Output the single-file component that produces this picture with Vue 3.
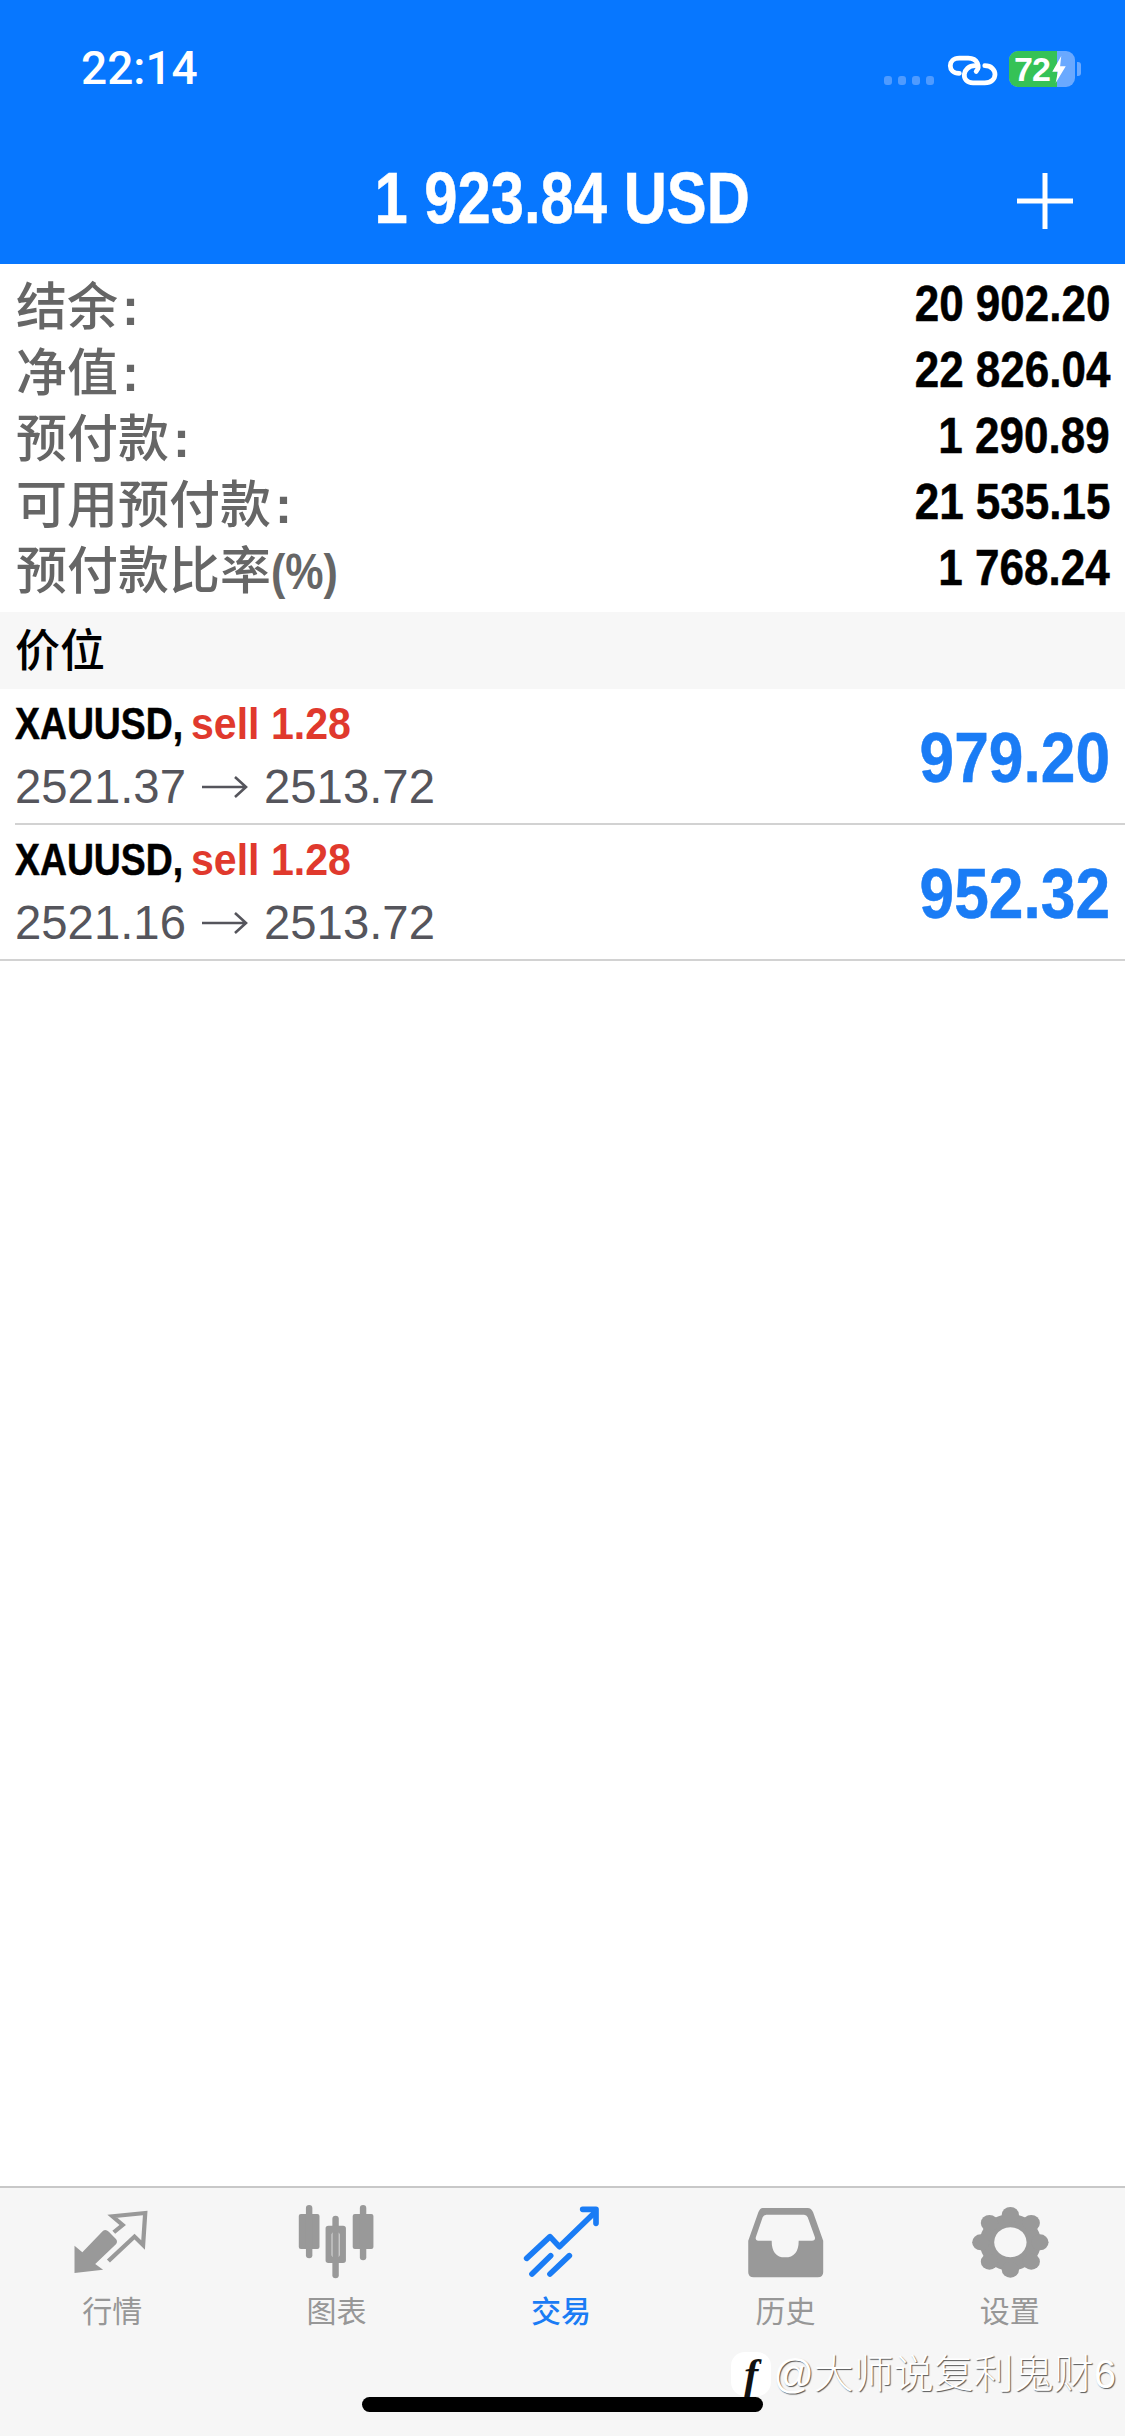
<script setup>
const rows = [
  { label: '结余', colon: true, value: '20 902.20' },
  { label: '净值', colon: true, value: '22 826.04' },
  { label: '预付款', colon: true, value: '1 290.89' },
  { label: '可用预付款', colon: true, value: '21 535.15' },
  { label: '预付款比率', suffix: '(%)', value: '1 768.24' },
]
const positions = [
  { open: '2521.37', close: '2513.72', profit: '979.20' },
  { open: '2521.16', close: '2513.72', profit: '952.32' },
]
const gearAngles = [0, 45, 90, 135, 180, 225, 270, 315]
const bump = (a, r) => ({
  cx: 1253 + r * Math.sin((a * Math.PI) / 180),
  cy: 220 - r * Math.cos((a * Math.PI) / 180),
})
</script>

<template>
  <div class="phone">
    <header class="top">
      <div class="status">
        <span class="time">22:14</span>
        <div class="status-right">
          <div class="dots"><i></i><i></i><i></i><i></i></div>
          <svg class="link" viewBox="250 70 170 95" fill="none" stroke="#fff" stroke-width="15" stroke-linecap="round">
            <path d="M292 128C254 128 254 80 292 80H320C350 80 358 108 345 122" />
            <path d="M342 104C300 104 295 158 335 158H372C415 158 415 104 372 104" />
          </svg>
          <div class="battery">
            <div class="battery-fill"></div>
            <span class="battery-num">72</span>
            <svg class="bolt" viewBox="0 0 14 24"><path d="M9 0 1 14h5l-2 10 9-15H8z" fill="#fff" /></svg>
          </div>
          <i class="nub"></i>
        </div>
      </div>
      <div class="titlebar">
        <span class="title">1 923.84 USD</span>
        <svg class="plus" viewBox="0 0 56 56"><path d="M28 0v56M0 28h56" stroke="#fff" stroke-width="5" /></svg>
      </div>
    </header>

    <main class="content">
      <section class="summary">
        <div v-for="r in rows" :key="r.label" class="sum-row">
          <span class="sum-label">{{ r.label }}<span v-if="r.colon" class="colon">:</span><span v-if="r.suffix" class="suffix">{{ r.suffix }}</span></span>
          <span class="sum-value">{{ r.value }}</span>
        </div>
      </section>
      <div class="band">价位</div>
      <section>
        <div v-for="(p, i) in positions" :key="i" class="pos" :class="{ last: i === 1 }">
          <div class="pos-left">
            <div class="pos-head"><span class="sym">XAUUSD,</span><span class="side">sell 1.28</span></div>
            <div class="pos-price"><span>{{ p.open }}</span><svg class="arrow" viewBox="0 0 46 22" fill="none" stroke="#55555c" stroke-width="2.6"><path d="M0 11h44M33 1l11 10-11 10" /></svg><span>{{ p.close }}</span></div>
          </div>
          <span class="profit">{{ p.profit }}</span>
        </div>
      </section>
    </main>

    <nav class="tabs">
      <div class="tab">
        <svg viewBox="203 105 224 240" preserveAspectRatio="none" fill="#999">
          <path d="M210 312V230L232 250L290 185Q298 180 306 188L326 210Q332 218 326 226L268 285L290 302Z" />
          <path d="M305 276L378 203L402 228L408 132L316 142L345 168L320 190" fill="none" stroke="#999" stroke-width="12" />
        </svg>
        <span>行情</span>
      </div>
      <div class="tab">
        <svg viewBox="833 105 224 240" preserveAspectRatio="none" fill="#999">
          <rect x="838" y="135" width="58" height="105" rx="6" />
          <rect x="858" y="108" width="18" height="160" rx="9" />
          <rect x="932" y="140" width="18" height="188" rx="9" />
          <path fill-rule="evenodd" d="M921 170H962Q970 170 970 178V274Q970 282 962 282H921Q913 282 913 274V178Q913 170 921 170ZM936 190Q930 190 930 196V259Q930 265 936 265H946Q952 265 952 259V196Q952 190 946 190Z" />
          <rect x="989" y="135" width="58" height="105" rx="6" />
          <rect x="1009" y="108" width="18" height="166" rx="9" />
        </svg>
        <span>图表</span>
      </div>
      <div class="tab active">
        <svg viewBox="33 30 240 240" fill="none" stroke="#1a7cf5" stroke-width="17" stroke-linecap="round" stroke-linejoin="round">
          <path d="M50 193L120 128L148 158L255 55" />
          <path d="M218 46H258V88" />
          <path d="M66 240L122 185M120 240L178 185" />
        </svg>
        <span>交易</span>
      </div>
      <div class="tab">
        <svg viewBox="516 105 222 240" preserveAspectRatio="none" fill="#999">
          <path fill-rule="evenodd" d="M565 117H690Q700 117 705 130L733 215V310Q733 325 718 325H540Q525 325 525 310V215L553 130Q558 117 565 117ZM575 137Q568 137 565 145L546 205Q544 215 552 215H590Q590 265 627 265Q665 265 665 215H702Q712 215 710 205L690 145Q687 137 680 137Z" />
        </svg>
        <span>历史</span>
      </div>
      <div class="tab">
        <svg viewBox="1141 105 222 240" preserveAspectRatio="none" fill="#999">
          <path fill-rule="evenodd" d="M1253 135A85 85 0 1 1 1252.9 135ZM1253 175A45 45 0 1 0 1253.1 175Z" />
          <circle v-for="a in gearAngles" :key="a" :cx="bump(a, 82).cx" :cy="bump(a, 82).cy" r="24" />
        </svg>
        <span>设置</span>
      </div>
      <div class="watermark">
        <span class="wm-logo">f</span>
        <span class="wm-text">@大师说复利鬼财6</span>
      </div>
      <div class="home"></div>
    </nav>
  </div>
</template>

<style>
html, body { margin: 0; background: #fff; }
</style>

<style scoped>
.phone {
  width: 1125px;
  height: 2436px;
  display: flex;
  flex-direction: column;
  background: #fff;
  overflow: hidden;
  font-family: "Liberation Sans", "Noto Sans CJK SC", sans-serif;
}
.top {
  height: 264px;
  background: #0777ff;
  color: #fff;
  display: flex;
  flex-direction: column;
}
.status {
  height: 108px;
  padding: 0 44px 0 81px;
  display: flex;
  justify-content: space-between;
  align-items: flex-start;
}
.time {
  margin-top: 41px;
  font: 500 46px/54px Roboto, sans-serif;
}
.status-right {
  margin-top: 51px;
  display: flex;
  align-items: flex-start;
}
.dots {
  display: flex;
  gap: 6px;
  margin-top: 25px;
  margin-right: 12px;
}
.dots i {
  width: 8px;
  height: 9px;
  border-radius: 3px;
  background: #4f9bff;
}
.link {
  width: 54px;
  height: 32px;
  margin-top: 3px;
  margin-right: 9px;
}
.battery {
  position: relative;
  width: 66px;
  height: 36px;
  border-radius: 9px;
  background: #6aa9ff;
  overflow: hidden;
  display: flex;
  align-items: center;
}
.battery-fill {
  position: absolute;
  left: 0;
  top: 0;
  bottom: 0;
  width: 48px;
  background: #35c256;
}
.battery-num {
  position: relative;
  margin-left: 5px;
  font: 700 34px/36px "Liberation Sans", sans-serif;
  letter-spacing: -1px;
}
.bolt {
  position: relative;
  width: 16px;
  height: 27px;
  margin-left: 1px;
}
.nub {
  width: 4px;
  height: 14px;
  margin: 11px 0 0 2px;
  border-radius: 0 3px 3px 0;
  background: #6aa9ff;
}
.titlebar {
  position: relative;
  height: 156px;
  display: flex;
  justify-content: center;
}
.title {
  display: inline-block;
  margin-top: 50px;
  font: 700 72px/80px "Liberation Sans", sans-serif;
  -webkit-text-stroke: 0.5px #fff;
  transform: scaleX(0.83);
  white-space: nowrap;
}
.plus {
  position: absolute;
  left: 1017px;
  top: 65px;
  width: 56px;
  height: 56px;
}
.content {
  flex: 1;
}
.summary {
  padding-top: 7px;
  padding-bottom: 11px;
}
.sum-row {
  height: 66px;
  padding: 0 15px 0 16px;
  display: flex;
  justify-content: space-between;
  align-items: center;
}
.sum-label {
  margin-top: 8px;
  font: 500 51px/66px "Liberation Sans", "Noto Sans CJK SC", sans-serif;
  color: #666;
  white-space: nowrap;
}
.colon {
  margin-left: 4px;
  font-weight: 700;
}
.suffix {
  display: inline-block;
  font-weight: 700;
  font-size: 50px;
  transform: scaleX(0.86);
  transform-origin: left center;
}
.sum-value {
  display: inline-block;
  font: 700 50px/66px "Liberation Sans", sans-serif;
  color: #000;
  -webkit-text-stroke: 0.5px #000;
  white-space: nowrap;
  transform: scaleX(0.88);
  transform-origin: right center;
}
.band {
  height: 77px;
  padding-left: 15px;
  background: #f7f7f7;
  font: 500 45px/80px "Liberation Sans", "Noto Sans CJK SC", sans-serif;
  color: #000;
}
.pos {
  height: 136px;
  margin-left: 15px;
  border-bottom: 2px solid #d2d2d2;
  box-sizing: border-box;
  padding-right: 15px;
  display: flex;
  justify-content: space-between;
  align-items: center;
}
.pos.last {
  margin-left: 0;
  padding-left: 15px;
}
.pos-left {
  display: flex;
  flex-direction: column;
  margin-bottom: 4px;
}
.pos-head {
  display: flex;
  height: 66px;
  align-items: center;
  white-space: nowrap;
  transform: scaleX(0.83);
  transform-origin: left center;
}
.sym {
  font: 700 45px/66px "Liberation Sans", sans-serif;
  color: #000;
  -webkit-text-stroke: 0.5px #000;
}
.side {
  display: inline-block;
  margin-left: 9px;
  font: 700 45px/66px "Liberation Sans", sans-serif;
  color: #e0392d;
  transform: scaleX(1.1);
  transform-origin: left center;
}
.pos-price {
  display: flex;
  align-items: center;
  height: 60px;
  font: 400 47.3px/60px "Liberation Sans", sans-serif;
  color: #55555c;
  white-space: nowrap;
}
.arrow {
  width: 46px;
  height: 22px;
  margin: 0 16px;
}
.profit {
  display: inline-block;
  margin-top: 3px;
  font: 700 70px/80px "Liberation Sans", sans-serif;
  color: #1a7cf5;
  -webkit-text-stroke: 0.5px #1a7cf5;
  transform: scaleX(0.89);
  transform-origin: right center;
}
.tabs {
  position: relative;
  height: 250px;
  box-sizing: border-box;
  border-top: 2px solid #c8c8c8;
  background: #f6f6f6;
  display: grid;
  grid-template-columns: repeat(5, 1fr);
  align-items: start;
  padding-top: 16px;
  padding-right: 3px;
}
.tab {
  display: flex;
  flex-direction: column;
  align-items: center;
  color: #979797;
}
.tab svg {
  width: 80px;
  height: 80px;
}
.tab span {
  margin-top: 8px;
  font: 400 30px/40px "Liberation Sans", "Noto Sans CJK SC", sans-serif;
}
.tab.active {
  color: #1a7cf5;
}
.tab.active span {
  font-weight: 500;
}
.watermark {
  position: absolute;
  right: 9px;
  top: 164px;
  display: flex;
  align-items: center;
  color: #fff;
}
.wm-logo {
  width: 40px;
  height: 44px;
  margin-right: 2px;
  border-radius: 14px;
  background: #fff;
  color: #111;
  text-align: center;
  font: italic 700 42px/44px "Liberation Serif", serif;
}
.wm-text {
  font: 300 40px/44px "Liberation Sans", "Noto Sans CJK SC", sans-serif;
  text-shadow: 1px 1px 1px rgba(0, 0, 0, 0.65);
  white-space: nowrap;
}
.home {
  position: absolute;
  left: 362px;
  top: 209px;
  width: 401px;
  height: 15px;
  border-radius: 8px;
  background: #000;
}
</style>
